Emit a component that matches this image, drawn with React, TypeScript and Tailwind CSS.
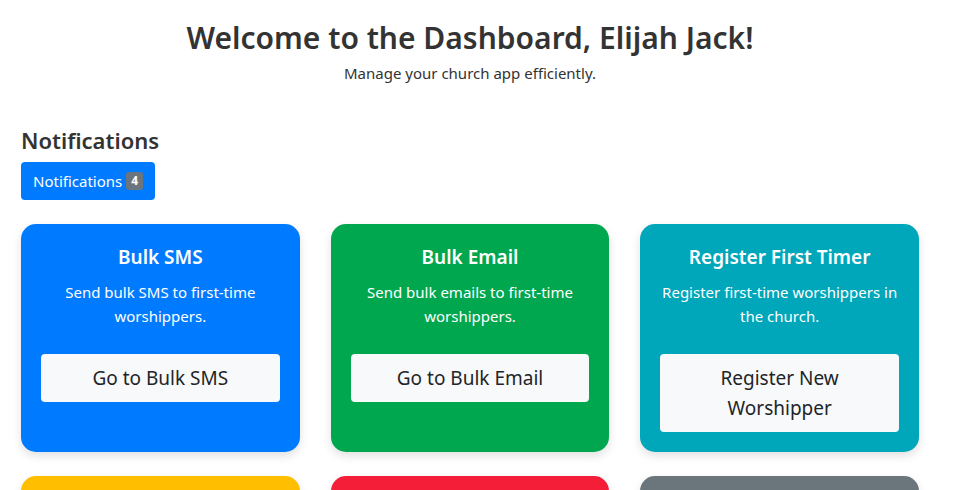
import React from 'react';

const CARDS = [
  {
    title: 'Bulk SMS',
    text: 'Send bulk SMS to first-time worshippers.',
    action: 'Go to Bulk SMS',
    bg: 'bg-[#007bff]',
  },
  {
    title: 'Bulk Email',
    text: 'Send bulk emails to first-time worshippers.',
    action: 'Go to Bulk Email',
    bg: 'bg-[#01a74f]',
  },
  {
    title: 'Register First Timer',
    text: 'Register first-time worshippers in the church.',
    action: 'Register New Worshipper',
    bg: 'bg-[#00a6b9]',
  },
  { title: 'Attendance', text: 'Track attendance records.', action: 'View Attendance', bg: 'bg-[#ffbf00]' },
  { title: 'Events', text: 'Manage church events.', action: 'Go to Events', bg: 'bg-[#f51e38]' },
  { title: 'Settings', text: 'Configure the church app.', action: 'Go to Settings', bg: 'bg-[#6a757c]' },
];

const App: React.FC = () => {
  return (
    <div className="w-full min-h-screen bg-white text-[#212529] font-['Noto_Sans',sans-serif] pl-[21px]">
      <div className="w-[898px]">
        {/* Header */}
        <div className="text-center pt-[18px]">
          <h1 className="text-[30px] leading-[40px] font-semibold text-[#333]">
            Welcome to the Dashboard, Elijah Jack!
          </h1>
          <p className="text-[15px] leading-6 mt-[3px] text-[#333]">Manage your church app efficiently.</p>
        </div>

        {/* Notifications */}
        <h3 className="text-[22px] leading-[28px] font-semibold text-[#333] mt-[41px]">Notifications</h3>
        <button className="mt-[8px] inline-flex items-center h-[38px] px-3 rounded bg-[#007bff] text-white text-[15px]">
          Notifications
          <span className="ml-1 bg-[#6c757d] text-white text-[12px] font-bold leading-none px-[5px] py-[3px] rounded-[3px]">
            4
          </span>
        </button>

        {/* Cards */}
        <div className="grid grid-cols-3 gap-x-[31px] gap-y-[24px] mt-[24px] pb-8">
          {CARDS.map((c) => (
            <div
              key={c.title}
              className={`${c.bg} rounded-[15px] shadow-[0_4px_10px_rgba(0,0,0,0.12)] p-5 text-white text-center`}
            >
              <h5 className="text-[19px] leading-6 font-semibold mt-[1px]">{c.title}</h5>
              <p className="text-[15px] leading-6 mt-[11px]">{c.text}</p>
              <button className="mt-[26px] w-full bg-[#f8f9fa] text-[#212529] text-[19px] leading-[30px] py-[9px] px-4 rounded-[4px]">
                {c.action}
              </button>
            </div>
          ))}
        </div>
      </div>
    </div>
  );
};

export default App;
